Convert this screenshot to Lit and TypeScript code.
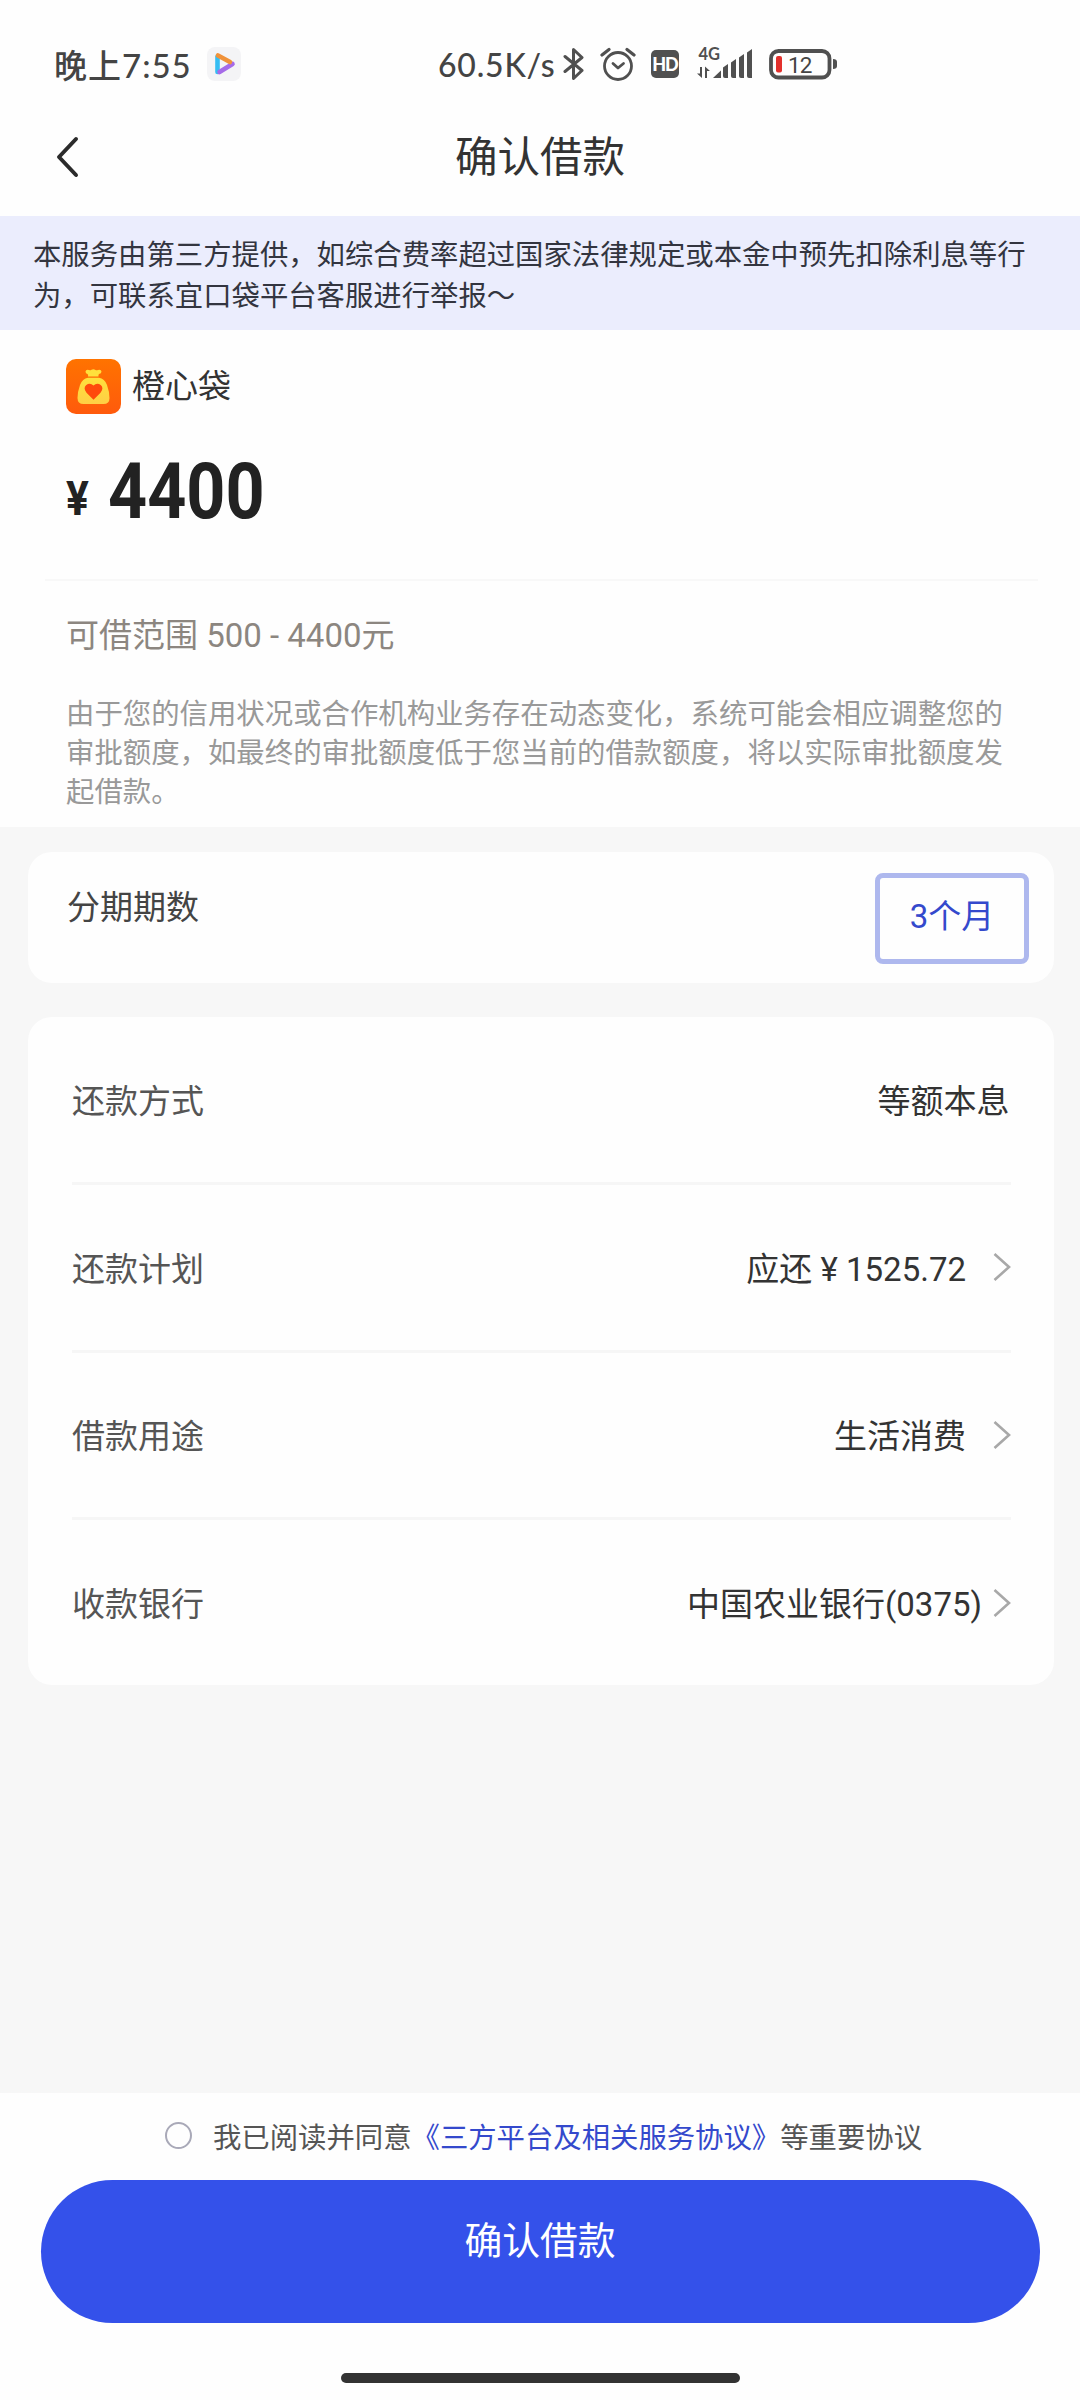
import { LitElement, html, css, svg, nothing } from "lit";
import { customElement, property } from "lit/decorators.js";
import { classMap } from "lit/directives/class-map.js";

interface DetailRow {
  label: string;
  value: string;
  link: boolean;
  tight?: boolean;
}

const ROWS: DetailRow[] = [
  { label: "还款方式", value: "等额本息", link: false },
  { label: "还款计划", value: "应还 ¥ 1525.72", link: true },
  { label: "借款用途", value: "生活消费", link: true },
  { label: "收款银行", value: "中国农业银行(0375)", link: true, tight: true },
];

const SIGNAL_BARS = [
  { x: 26, top: 17 },
  { x: 34, top: 12 },
  { x: 42, top: 7 },
  { x: 50, top: 2 },
];

@customElement("status-bar")
export class StatusBar extends LitElement {
  @property() time = "";

  @property() speed = "";

  @property() battery = "";

  protected render() {
    return html`
      <span class="time">${this.time}</span>
      <svg class="player" width="34" height="34" viewBox="0 0 34 34">
        <rect width="34" height="34" rx="8" fill="#f4f4f6" />
        <g fill="none" stroke-width="4.600" stroke-linecap="round">
          <path d="M10.500 9.500v15.500" stroke="#35bdf3" />
          <path d="M12.500 25l13-8" stroke="#a66be8" />
          <path d="M11 8.500l12 6.500" stroke="#f0923a" />
        </g>
      </svg>
      <span class="speed">${this.speed}</span>
      <svg class="bluetooth" width="22" height="34" viewBox="0 0 22 34">
        <path
          d="M2 9.500l17 14-8.500 8V2.500l8.500 8L2 24.500"
          fill="none"
          stroke="#505050"
          stroke-width="3"
          stroke-linejoin="round"
          stroke-linecap="round"
        />
      </svg>
      <svg class="alarm" width="36" height="34" viewBox="0 0 36 34">
        <g fill="none" stroke="#505050" stroke-width="2.800" stroke-linecap="round">
          <circle cx="18" cy="19" r="13.500" />
          <path d="M13 16.500l5 4.500 5.500-4.500" stroke-linejoin="round" />
          <path d="M2 8l7-5.500M34 8l-7-5.500" stroke-width="3.200" />
        </g>
      </svg>
      <span class="hd">HD</span>
      <svg class="signal" width="57" height="44" viewBox="0 -5 57 44">
        <text class="network" x="1.500" y="13">4G</text>
        <g fill="#505050">
          <path d="M16 31l8-7.500V31z" />
          ${SIGNAL_BARS.map(
            (b) => svg`<path d=${`M${b.x + 2} 31h3V${b.top}l-5 3.500V29q0 2 2 2z`} />`,
          )}
          <path d="M3 20h2v11L0 26.500h3zM8 31h2V24h3L8 19.500z" />
        </g>
      </svg>
      <svg class="battery" width="69" height="34" viewBox="0 0 69 34">
        <rect x="2" y="4" width="58.500" height="26.500" rx="7.500" fill="none" stroke="#505050" stroke-width="3.800" />
        <rect x="7" y="9" width="6" height="16.500" rx="2" fill="#e3302c" />
        <path d="M64 12q4 0 4 3v4q0 3-4 3z" fill="#505050" />
        <text class="level" x="19" y="25.500">${this.battery}</text>
      </svg>
    `;
  }

  static styles = css`
    :host {
      display: flex;
      align-items: center;
      box-sizing: border-box;
      height: 104px;
      padding: 24px 0 0 54px;
      color: #444;
      font-family: Lato, "Noto Sans CJK SC", sans-serif;
    }

    svg {
      flex: none;
    }

    .time {
      width: 153px;
      font-size: 33px;
      font-weight: 500;
      letter-spacing: 1px;
      white-space: nowrap;
    }

    .speed {
      width: 117px;
      margin-left: 197px;
      font-size: 32px;
      font-weight: 500;
      letter-spacing: 0.8px;
      white-space: nowrap;
    }

    .bluetooth {
      margin-left: 8px;
    }

    .alarm {
      margin-left: 15px;
    }

    .hd {
      width: 28px;
      height: 28px;
      margin-left: 15px;
      border-radius: 5px;
      background: #505050;
      color: #fff;
      font-size: 18px;
      font-weight: 900;
      line-height: 28px;
      text-align: center;
      letter-spacing: -1px;
    }

    .signal {
      margin-left: 18px;
    }

    .network {
      font-size: 16.5px;
      font-weight: 700;
      fill: #505050;
    }

    .battery {
      margin-left: 15px;
    }

    .level {
      font-family: Roboto, sans-serif;
      font-size: 22.5px;
      letter-spacing: -1px;
      fill: #444;
    }
  `;
}

@customElement("detail-row")
export class DetailRowElement extends LitElement {
  @property() label = "";

  @property() value = "";

  @property({ type: Boolean }) link = false;

  @property({ type: Boolean }) tight = false;

  protected render() {
    return html`
      <span class="label">${this.label}</span>
      <span class=${classMap({ value: true, plain: !this.link })}>${this.value}</span>
      ${this.link
        ? html`
            <svg
              class=${classMap({ arrow: true, tight: this.tight })}
              width="18"
              height="30"
              viewBox="0 0 18 30"
            >
              <path d="M1.500 2l14.500 13L1.500 28" fill="none" stroke="#a8a8a8" stroke-width="2.600" />
            </svg>
          `
        : nothing}
    `;
  }

  static styles = css`
    :host {
      display: flex;
      align-items: center;
      box-sizing: border-box;
      padding-top: 5px;
      font-size: 33px;
      line-height: 48px;
      color: #333;
    }

    .label {
      flex: 1;
      color: #555;
    }

    .value.plain {
      margin-right: 1.5px;
    }

    .arrow {
      margin: -5px 0 0 27px;
    }

    .arrow.tight {
      margin-left: 11px;
    }
  `;
}

@customElement("app-root")
export class AppRoot extends LitElement {
  private renderLogo() {
    return html`
      <svg class="logo" width="55" height="55" viewBox="0 0 55 55">
        <defs>
          <linearGradient id="tile" x1="0" y1="0" x2="0" y2="1">
            <stop offset="0" stop-color="#ff7300" />
            <stop offset="1" stop-color="#ff5a0c" />
          </linearGradient>
          <linearGradient id="bag" x1="0" y1="0" x2="0" y2="1">
            <stop offset="0" stop-color="#ffe03c" />
            <stop offset="1" stop-color="#ffcf45" />
          </linearGradient>
        </defs>
        <rect width="55" height="55" rx="10" fill="url(#tile)" />
        <path
          d="M19.500 12.500q.5-2.500 3.500-1.500 1.500.7 2 0 2.500-1.500 4.500 0 1 .7 2.500 0 3-1 3.500 1.500 0 2-2.500 2.500-.8.500-.5 2.500h-10.500q.5-2-.5-2.500-2-.5-2-2.500z"
          fill="#ffe03c"
        />
        <path
          d="M22 18.800h11q5.500.7 8 7.200 2.500 7 2.500 13 0 6-6 6h-20q-6 0-6-6 0-6 2.500-13 2.500-6.500 8-7.200z"
          fill="url(#bag)"
        />
        <path
          d="M27.500 40.800l-7-7q-3.500-4.500-.5-7.500 4-3 7.500.3 3.500-3.300 7.500-.3 3 3-.5 7.500z"
          fill="#ff4a0c"
        />
      </svg>
    `;
  }

  protected render() {
    return html`
      <status-bar time="晚上7:55" speed="60.5K/s" battery="12"></status-bar>

      <header class="nav">
        <svg class="back" width="24" height="42" viewBox="0 0 24 42">
          <path
            d="M21 3L4 21l17 18"
            fill="none"
            stroke="#2b2b2b"
            stroke-width="4"
            stroke-linecap="round"
            stroke-linejoin="round"
          />
        </svg>
        <h1 class="title">确认借款</h1>
      </header>

      <p class="notice">
        本服务由第三方提供，如综合费率超过国家法律规定或本金中预先扣除利息等行为，可联系宜口袋平台客服进行举报～
      </p>

      <section class="summary">
        <div class="product">${this.renderLogo()}<span class="name">橙心袋</span></div>
        <div class="amount">
          <span class="currency">¥</span>
          <span class="figure">4400</span>
        </div>
        <div class="divider"></div>
        <div class="range">可借范围 500 - 4400元</div>
        <p class="hint">
          由于您的信用状况或合作机构业务存在动态变化，系统可能会相应调整您的审批额度，如最终的审批额度低于您当前的借款额度，将以实际审批额度发起借款。
        </p>
      </section>

      <section class="card term">
        <span class="term-label">分期期数</span>
        <button class="term-option">3个月</button>
      </section>

      <section class="card details">
        ${ROWS.map(
          (r) => html`
            <detail-row
              class="row"
              .label=${r.label}
              .value=${r.value}
              .link=${r.link}
              .tight=${r.tight ?? false}
            ></detail-row>
          `,
        )}
      </section>

      <footer class="footer">
        <div class="agreement">
          <span class="radio"></span>
          <span class="agreement-text">我已阅读并同意<a class="terms">《三方平台及相关服务协议》</a>等重要协议</span>
        </div>
        <button class="confirm">确认借款</button>
        <div class="home-bar"></div>
      </footer>
    `;
  }

  static styles = css`
    :host {
      display: flex;
      flex-direction: column;
      box-sizing: border-box;
      width: 1080px;
      height: 2400px;
      overflow: hidden;
      background: #f7f7f7;
      color: #333;
      font-family: Roboto, "Noto Sans CJK SC", sans-serif;
      font-size: 33px;
    }

    status-bar,
    .nav,
    .summary {
      background: #fefefe;
    }

    h1,
    p {
      margin: 0;
      font-weight: 400;
    }

    button {
      border: 0;
      padding: 0;
      font-family: inherit;
    }

    .nav {
      display: grid;
      grid-template-columns: 120px 1fr 120px;
      align-items: center;
      height: 112px;
    }

    .back {
      margin: -7px 0 0 54.5px;
    }

    .title {
      margin-top: -5px;
      font-size: 42.5px;
      line-height: 60px;
      text-align: center;
    }

    .notice {
      box-sizing: border-box;
      height: 114px;
      padding: 19px 33px 0;
      background: #ebedfd;
      color: #333540;
      font-size: 28.37px;
      line-height: 41px;
    }

    .summary {
      box-sizing: border-box;
      height: 497px;
      padding: 29px 42px 0 45px;
    }

    .product {
      display: flex;
      align-items: center;
      gap: 11px;
      height: 55px;
      padding-left: 21px;
    }

    .name {
      margin-bottom: 6px;
    }

    .amount {
      display: flex;
      align-items: baseline;
      height: 90px;
      margin-top: 33px;
      padding-left: 21px;
      color: #222;
      font-weight: 700;
      line-height: 90px;
    }

    .currency {
      width: 42px;
      font-size: 49px;
      transform: translateY(-3.5px) scaleX(0.87);
      transform-origin: left;
    }

    .figure {
      font-size: 78px;
      transform: scaleX(0.875);
      transform-origin: left;
    }

    .divider {
      height: 2px;
      margin-top: 42px;
      background: #f8f8f8;
    }

    .range {
      margin: 31px 0 0 21px;
      color: #8c8680;
      line-height: 48px;
    }

    .hint {
      width: 940px;
      margin: 35px 0 0 21px;
      color: #999;
      font-size: 28.4px;
      line-height: 39px;
    }

    .card {
      box-sizing: border-box;
      width: 1026px;
      margin-left: 28px;
      border-radius: 24px;
      background: #fefefe;
    }

    .term {
      display: flex;
      justify-content: space-between;
      align-items: flex-start;
      height: 131px;
      margin-top: 25px;
      padding: 21px 25px 0 39px;
    }

    .term-label {
      margin-top: 11px;
      color: #444;
      line-height: 48px;
    }

    .term-option {
      box-sizing: border-box;
      width: 154px;
      height: 91px;
      padding-bottom: 9px;
      border: 5px solid #aeb8ee;
      border-radius: 8px;
      background: #fefefe;
      color: #3449cc;
      font-size: 33px;
    }

    .details {
      display: grid;
      grid-template-rows: 165px repeat(3, 1fr);
      height: 668px;
      margin-top: 34px;
      padding: 0 43px 0 44px;
    }

    .row + .row {
      border-top: 3px solid #f6f6f6;
    }

    .footer {
      display: flex;
      flex-direction: column;
      align-items: center;
      height: 307px;
      margin-top: auto;
      background: #fefefe;
    }

    .agreement {
      display: flex;
      align-items: center;
      gap: 21px;
      height: 87px;
      margin-left: 7px;
      color: #555;
      font-size: 28.37px;
    }

    .agreement-text {
      margin-bottom: 3px;
    }

    .radio {
      box-sizing: border-box;
      width: 27px;
      height: 27px;
      margin-bottom: 2px;
      border: 2px solid #a9a9b8;
      border-radius: 50%;
    }

    .terms {
      color: #3449cc;
    }

    .confirm {
      width: 999px;
      height: 143px;
      padding-bottom: 29px;
      border-radius: 72px;
      background: #3451ea;
      color: #fff;
      font-size: 37.8px;
    }

    .home-bar {
      width: 399px;
      height: 10px;
      margin-top: 50px;
      border-radius: 5px;
      background: #333;
    }
  `;
}

declare global {
  interface HTMLElementTagNameMap {
    "status-bar": StatusBar;
    "detail-row": DetailRowElement;
    "app-root": AppRoot;
  }
}
